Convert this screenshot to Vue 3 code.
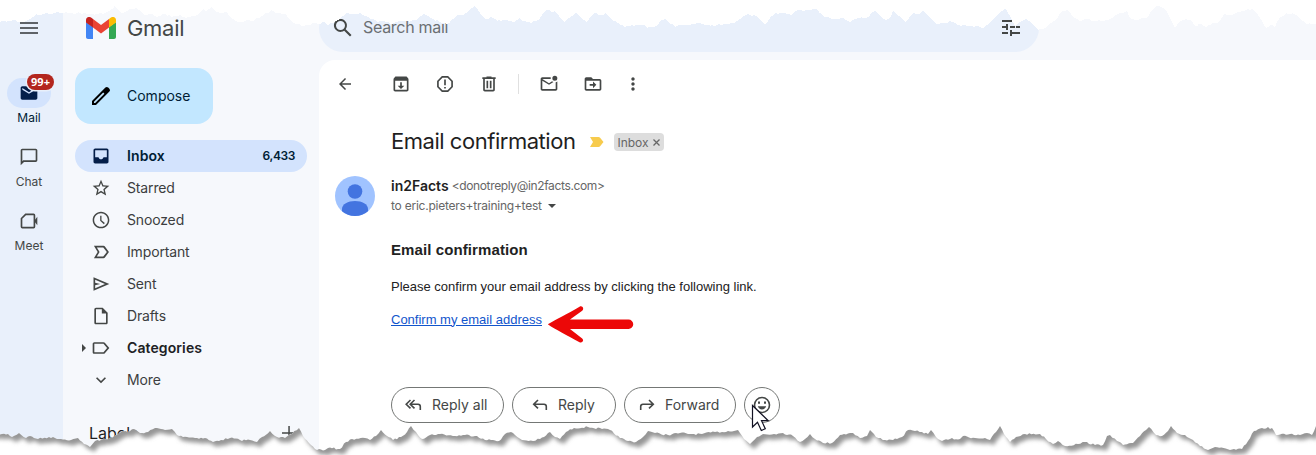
<script setup>
const navItems = [
  { label: 'Inbox', icon: 'inbox', count: '6,433', active: true },
  { label: 'Starred', icon: 'star' },
  { label: 'Snoozed', icon: 'clock' },
  { label: 'Important', icon: 'important' },
  { label: 'Sent', icon: 'sent' },
  { label: 'Drafts', icon: 'draft' },
  { label: 'Categories', icon: 'label', bold: true },
  { label: 'More', icon: 'chevron' },
]

const icons = {
  inbox: 'M19 3H5c-1.1 0-2 .9-2 2v14c0 1.1.9 2 2 2h14c1.1 0 2-.9 2-2V5c0-1.1-.9-2-2-2zm0 10.500h-4c-.400 1.300-1.500 2.500-3 2.500s-2.600-1.200-3-2.500H5V5h14z',
  star: 'M22 9.24l-7.19-.62L12 2 9.19 8.63 2 9.24l5.46 4.73L5.82 21 12 17.27 18.18 21l-1.63-7.03L22 9.24zM12 15.4l-3.76 2.27 1-4.28-3.32-2.88 4.38-.38L12 6.1l1.71 4.04 4.38.38-3.32 2.88 1 4.28L12 15.4z',
  clock: 'M12 2C6.5 2 2 6.5 2 12s4.5 10 10 10 10-4.5 10-10S17.5 2 12 2zm0 18.2c-4.5 0-8.2-3.7-8.2-8.2S7.500 3.800 12 3.800s8.200 3.700 8.200 8.200-3.700 8.200-8.200 8.200zM12.600 7H11v6l4.400 4 1.200-1.300-4-3.500z',
  important: 'M3.500 19.500 8 12 3.500 4.500H15c.700 0 1.300.300 1.700.800L21.500 12l-4.800 6.700c-.400.500-1 .800-1.700.800zM7 17.500h7.700L19 12l-4.300-5.500H7l3.300 5.500z',
  sent: 'M3 4v16l19-8zm2 13v-3.500l6-1.500-6-1.500V7l11.800 5z',
  draft: 'M14 2H6c-1.100 0-2 .900-2 2v16c0 1.100.900 2 2 2h12c1.100 0 2-.900 2-2V8zM6 20V4h7v5h5v11z',
  label: 'M15 5H4c-1.100 0-2 .900-2 2v10c0 1.100.900 2 2 2h11c.700 0 1.300-.300 1.600-.800L22 12l-5.400-6.200C16.300 5.300 15.700 5 15 5zm0 12H4V7h11l4.300 5z',
  chevron: 'M16.600 8.600 12 13.200 7.400 8.600 6 10l6 6 6-6z',
}

const tools = {
  back: 'M20 11H7.800l5.600-5.600L12 4l-8 8 8 8 1.400-1.400L7.800 13H20z',
  archive: 'M20.500 5.200 19.200 3.500C18.900 3.200 18.500 3 18 3H6c-.500 0-.900.200-1.200.500L3.500 5.200C3.200 5.600 3 6 3 6.500V19c0 1.100.900 2 2 2h14c1.100 0 2-.900 2-2V6.500c0-.500-.200-.900-.500-1.300zM5 19V8h14v11zM13 10h-2v4H8l4 4 4-4h-3z',
  spam: 'M11 6.500h2v7h-2zM11 15.500h2v2h-2zM15.700 2.500H8.300L2.500 8.300v7.400l5.800 5.800h7.400l5.800-5.800V8.300zM19.500 15 15 19.500H9L4.500 15V9L9 4.500h6L19.500 9z',
  trash: 'M15 4V3H9v1H4v2h1v13c0 1.100.900 2 2 2h10c1.100 0 2-.900 2-2V6h1V4zm2 15H7V6h10zM9 8h2v9H9zm4 0h2v9h-2z',
  unread: 'M22 9v9c0 1.100-.900 2-2 2H4c-1.100 0-2-.900-2-2V6c0-1.100.900-2 2-2h10.100a5 5 0 0 0 0 2H4l8 5 3.700-2.300c.500.400 1 .800 1.700 1L12 13 4 8v10h16V9.900c.700-.100 1.400-.500 2-.900zM16 5a3 3 0 1 0 6 0 3 3 0 0 0-6 0z',
  move: 'M20 6h-8l-2-2H4c-1.100 0-2 .900-2 2v12c0 1.100.900 2 2 2h16c1.100 0 2-.900 2-2V8c0-1.100-.900-2-2-2zm0 12H4V8h16zM12 17l4-4-4-4v3H8v2h4z',
  more: 'M12 8c1.100 0 2-.900 2-2s-.900-2-2-2-2 .900-2 2 .900 2 2 2zm0 2c-1.100 0-2 .900-2 2s.900 2 2 2 2-.900 2-2-.900-2-2-2zm0 6c-1.100 0-2 .900-2 2s.900 2 2 2 2-.900 2-2-.900-2-2-2z',
}

const topEdge = '0,22 5,21 11,21 13,20 18,22 24,22 28,20 33,17 36,14 40,15 46,13 52,14 58,12 64,13 72,13 84,13 97,14 105,13 109,11 113,9 114.5,6 118,10 122,13 125,12 131,9 136,8 139,10 145,15 151,14 157,17 165,14 172,17 180,15 186,18 195,16 199,14 203,9 206,11 209,9 212,7 216,12 223,13 227,12 231,18 236,21 242,22 247,20 253,21 257,18 262,16 265,13 268,13 271,10 277,13 285,14 291,21 297,24 302,26 310,25 316,23 320,24 324,22 328,25 333,23 338,20 343,16 346,13 352,14 360,13 366,16 371,19 378,22 384,21 391,24 399,21 411,21 417,20 421,16 424,13 428,16 433,19 440,22 447,24 453,19 458,15 463,15 468,12 474,6 478,10 483,17 487,19 491,17 497,21 507,20 513,22 519,18 525,21 531,23 538,20 542,15 547,10 552,12 555,11 559,16 565,22 569,18 576,13 580,17 587,22 592,15 595,13 601,15 606,13 612,19 618,23 624,27 632,25 640,25 645,25 647,28 657,26 661,20 665,19 671,24 675,27 680,25 690,25 700,23 708,25 717,25 725,24 735,23 741,19 746,15 754,15 760,20 765,25 770,18 776,13 785,13 791,15 798,10 808,10 816,9 824,17 835,19 841,18 850,22 860,18 868,17 872,12 875,11 880,15 886,20 891,17 893,11 899,16 906,22 913,13 919,14 923,11 929,16 937,24 944,23 950,21 958,25 965,25 972,26 980,27 984,28 993,19 1005,8 1010,16 1015,26 1020,22 1026,19 1033,24 1038,30 1045,28 1053,21 1057,19 1061,12 1067,10 1073,17 1079,21 1085,19 1096,21 1104,21 1112,18 1118,14 1122,13 1127,11 1131,19 1137,20 1142,18 1147,18 1151,11 1157,6 1164,8 1168,14 1175,28 1180,21 1186,19 1192,21 1195,26 1201,24 1206,27 1213,23 1218,23 1225,14 1231,15 1238,12 1248,9 1254,10 1260,18 1266,28 1270,25 1275,27 1279,19 1286,13 1294,14 1300,19 1307,24 1316,24'
const bottomEdge = '-10,434 8,434 12,437 19,433 26,438 30,436 38,439 49,437 61,439 71,440 78,438 84,444 90,447 95,441 104,439 112,438 121,432 130,431 134,429 140,433 148,432 155,428 165,430 172,429 177,435 187,437 197,438 205,438 213,442 221,440 230,438 240,440 250,440 257,442 262,437 270,431 277,437 285,438 292,434 299,428 303,436 311,445 315,449 325,450 328,448 340,449 346,442 352,439 365,438 370,440 376,436 381,430 387,436 393,440 401,437 407,432 411,426 416,432 422,439 430,435 440,434 455,436 465,435 477,436 485,440 493,440 499,441 505,434 511,432 515,435 522,440 533,441 540,439 544,437 550,432 555,437 560,439 566,432 574,428 588,427 602,429 610,430 620,438 628,441 636,442 643,437 648,431 655,433 668,435 680,433 690,434 702,434 715,432 722,432 738,430 744,439 750,444 757,437 763,434 774,434 783,433 793,436 800,442 805,439 810,434 815,439 823,443 832,443 840,435 850,433 853,433 860,438 867,436 870,430 876,437 885,440 897,439 902,437 908,430 915,431 922,432 928,434 931,430 936,437 942,441 950,439 960,439 963,436 975,438 985,438 990,440 996,432 1000,426 1004,434 1010,442 1016,437 1025,434 1040,434 1046,439 1053,444 1058,441 1065,446 1078,444 1085,442 1095,445 1103,445 1107,436 1110,435 1117,441 1123,445 1133,443 1140,436 1146,430 1149,427 1156,435 1162,436 1168,431 1171,426 1177,433 1185,435 1193,440 1200,446 1208,450 1215,447 1230,450 1242,449 1248,441 1254,431 1262,428 1272,428 1276,435 1290,434 1300,435 1307,433 1312,435 1316,426 1330,426'

// Adds small steps between the main points so that the paper edge looks ragged.
function ragged(edge) {
  const pts = edge.split(' ').map((p) => p.split(',').map(Number))
  const out = []
  let seed = 7
  pts.forEach((p, i) => {
    out.push(p.join(','))
    const n = pts[i + 1]
    if (!n) return
    const steps = Math.floor((n[0] - p[0]) / 2)
    for (let s = 1; s < steps; s++) {
      seed = (seed * 16807) % 2147483647
      const t = s / steps
      const j = (seed / 2147483647 - 0.5) * 1.8
      out.push(`${(p[0] + (n[0] - p[0]) * t).toFixed(1)},${(p[1] + (n[1] - p[1]) * t + j).toFixed(1)}`)
    }
  })
  return out.join(' ')
}
const topTear = `0,0 ${ragged(topEdge)} 1316,0`
const bottomLine = ragged(bottomEdge)
const bottomTear = `-10,470 ${bottomLine} 1330,470`
const paper = `-10,400 ${bottomLine} 1330,400`
</script>

<template>
  <div class="page">
    <aside class="rail">
      <svg class="menu" width="18" height="12" viewBox="0 0 18 12"><path d="M0 0h18v2H0zM0 5h18v2H0zM0 10h18v2H0z" fill="#5f6368" /></svg>
      <div class="rail-item on">
        <div class="pill">
          <svg width="20" height="20" viewBox="0 0 24 24"><path fill="#041e49" d="M20 4H4c-1.100 0-2 .900-2 2v12c0 1.100.900 2 2 2h16c1.100 0 2-.900 2-2V6c0-1.100-.900-2-2-2zm0 4-8 5-8-5V6l8 5 8-5z" /></svg>
          <span class="badge">99+</span>
        </div>
        <span>Mail</span>
      </div>
      <div class="rail-item">
        <div class="pill"><svg width="20" height="20" viewBox="0 0 24 24"><path fill="#444746" d="M20 2H4c-1.100 0-2 .900-2 2v18l4-4h14c1.100 0 2-.900 2-2V4c0-1.100-.900-2-2-2zm0 14H5l-1 1V4h16z" /></svg></div>
        <span>Chat</span>
      </div>
      <div class="rail-item">
        <div class="pill"><svg width="20" height="20" viewBox="0 0 24 24"><path fill="none" stroke="#444746" stroke-width="2" d="M8 4h9.500c.600 0 1 .400 1 1v14c0 .600-.400 1-1 1H4c-.600 0-1-.400-1-1V9z" /><path fill="#444746" d="M18 12l4-5v10z" /></svg></div>
        <span>Meet</span>
      </div>
    </aside>

    <nav class="side">
      <div class="brand">
        <svg width="30" height="22" viewBox="0 0 30 22">
          <path fill="#4285f4" d="M0 5v15c0 1.100.900 2 2 2h5V10z" />
          <path fill="#34a853" d="M30 5v15c0 1.100-.900 2-2 2h-5V10z" />
          <path fill="#ea4335" d="M7 10.500V2l8 6 8-6v8.500l-8 6z" />
          <path fill="#c5221f" d="M0 5.500V3C0 .300 3.200-1 5.400.800L7 2v8.500z" />
          <path fill="#fbbc04" d="M30 5.500V3c0-2.700-3.200-4-5.400-2.200L23 2v8.500z" />
        </svg>
        <span>Gmail</span>
      </div>
      <div class="compose">
        <svg width="24" height="24" viewBox="0 0 24 24"><path d="M20.400 4.800 19.200 3.600a2 2 0 0 0-2.800 0L3 17v4h4L20.400 7.600a2 2 0 0 0 0-2.800zM6.200 19H5v-1.200l9.200-9.200 1.200 1.200z" /></svg>
        <span>Compose</span>
      </div>
      <div class="list">
        <div v-for="n in navItems" :key="n.label" class="nav" :class="{ active: n.active, bold: n.bold }">
          <i v-if="n.bold" class="caret"></i>
          <svg width="20" height="20" viewBox="0 0 24 24"><path :d="icons[n.icon]" :fill="n.active ? '#041e49' : '#444746'" /></svg>
          <span class="name">{{ n.label }}</span>
          <span v-if="n.count" class="count">{{ n.count }}</span>
        </div>
      </div>
      <div class="labels">
        <span>Labels</span>
        <svg width="14" height="14" viewBox="0 0 14 14"><path d="M6.300 0h1.500v6.300H14v1.500H7.800V14H6.300V7.800H0V6.300h6.300z" fill="#444746" /></svg>
      </div>
    </nav>

    <main class="content">
      <div class="search">
        <svg class="lens" width="24" height="24" viewBox="0 0 24 24"><path fill="#444746" d="M20.500 19 14.700 13.200a6.500 6.500 0 1 0-1.500 1.500l5.800 5.800zM9.500 14a4.500 4.500 0 1 1 0-9 4.500 4.500 0 0 1 0 9z" /></svg>
        <span>Search mail</span>
        <svg class="tune" width="18" height="16" viewBox="0 0 18 16"><path fill="#444746" d="M0 0h10v2H0zM0 6h4V4h2v6H4V8H0zM8 6h5v2H8zM14 6h4v2h-4zM0 12h6v2H0zM8 10h2v2h8v2h-8v2H8z" /></svg>
      </div>
      <section class="mail">
        <div class="toolbar">
          <svg class="t-back" width="18" height="18" viewBox="0 0 24 24"><path :d="tools.back" /></svg>
          <svg width="20" height="20" viewBox="0 0 24 24"><path :d="tools.archive" /></svg>
          <svg width="20" height="20" viewBox="0 0 24 24"><path :d="tools.spam" /></svg>
          <svg width="20" height="20" viewBox="0 0 24 24"><path :d="tools.trash" /></svg>
          <i class="sep"></i>
          <svg width="20" height="20" viewBox="0 0 24 24"><path :d="tools.unread" /></svg>
          <svg width="20" height="20" viewBox="0 0 24 24"><path :d="tools.move" /></svg>
          <svg class="t-more" width="20" height="20" viewBox="0 0 24 24"><path :d="tools.more" /></svg>
        </div>
        <div class="subject">
          <h1>Email confirmation</h1>
          <svg width="14" height="10" viewBox="0 0 14 10"><path fill="#f7cb4d" d="M0 0h8.500c.700 0 1.200.300 1.600.800L13.500 5l-3.400 4.200c-.400.500-.900.800-1.600.800H0l3-5z" /></svg>
          <span class="chip"><span>Inbox</span><svg width="7" height="7" viewBox="0 0 7 7"><path d="m.500.500 6 6m0-6-6 6" stroke="#666" stroke-width="1.300" /></svg></span>
        </div>
        <div class="sender">
          <svg class="avatar" width="40" height="40" viewBox="0 0 40 40">
            <circle cx="20" cy="20" r="20" fill="#a0c3ff" />
            <circle cx="20" cy="15.500" r="7.300" fill="#4374e0" />
            <path fill="#4374e0" d="M7 35.200V33c0-5 6-8 13-8s13 3 13 8v2.200a20 20 0 0 1-26 0z" />
          </svg>
          <div class="who">
            <div class="from"><b>in2Facts</b><span>&lt;donotreply@in2facts.com&gt;</span></div>
            <div class="to"><span>to eric.pieters+training+test</span><i></i></div>
          </div>
        </div>
        <div class="body">
          <h2>Email confirmation</h2>
          <p>Please confirm your email address by clicking the following link.</p>
          <div class="link-row">
            <a>Confirm my email address</a>
            <svg width="87" height="37" viewBox="0 0 87 37"><path d="M.800 18.200C9 13.500 20 8 32.500.700c3-1.500 5 2 2.700 4L23 13.500h58.500a4.700 4.700 0 0 1 0 9.500H23l12.200 9.500c2.300 2-.200 5-2.700 3.700C20 29 9 24 .800 18.200z" fill="#ec0808" /></svg>
          </div>
        </div>
        <div class="actions">
          <div class="btn all">
            <svg width="20" height="20" viewBox="0 0 20 20"><path d="M6.500 5 2.200 9.200l4.300 4.200M10.500 5 6.200 9.200l4.300 4.200M6.500 9.200H14c1.400 0 2.300.900 2.300 2.300V15" /></svg><span>Reply all</span>
          </div>
          <div class="btn reply">
            <svg width="20" height="20" viewBox="0 0 20 20"><path d="M8 5 3.700 9.200 8 13.400M4 9.200h10c1.400 0 2.300.900 2.300 2.300V15" /></svg><span>Reply</span>
          </div>
          <div class="btn fwd">
            <svg width="20" height="20" viewBox="0 0 20 20"><path d="m12 5 4.300 4.200-4.300 4.200M16 9.200H6c-1.400 0-2.300.900-2.300 2.300V15" /></svg><span>Forward</span>
          </div>
          <div class="btn emoji">
            <svg width="20" height="20" viewBox="0 0 20 20"><circle cx="10" cy="10" r="7.500" /><path class="solid" d="M6 6.500h2v2.200H6zM12 6.500h2v2.200h-2zM5.800 11.200h8.400c-.600 2-2.200 3.200-4.200 3.200s-3.600-1.200-4.200-3.200z" /></svg>
          </div>
        </div>
      </section>
    </main>

    <svg class="tears" width="1316" height="455" viewBox="0 0 1316 455">
      <defs>
        <clipPath id="lower"><polygon :points="bottomTear" /></clipPath>
        <filter id="soft" x="-5%" y="-50%" width="110%" height="200%"><feGaussianBlur stdDeviation="2" /></filter>
      </defs>
      <polygon :points="topTear" fill="#fff" shape-rendering="crispEdges" />
      <g clip-path="url(#lower)">
        <rect y="420" width="1316" height="35" fill="#fff" />
        <polygon :points="paper" fill="#969696" transform="translate(4 5)" filter="url(#soft)" />
      </g>
    </svg>
    <svg class="cursor" width="19" height="28" viewBox="0 0 19 28"><path d="M1.500 1.500V23l5-4.700 3.800 8.200 4-1.800-3.800-8h6.700z" fill="#fff" stroke="#111122" stroke-width="1.200" /></svg>
  </div>
</template>

<style>
body { margin: 0; background: #fff; }
</style>

<style scoped>
.page { position: relative; display: flex; width: 1316px; height: 455px; overflow: hidden; background: #f6f8fc; font-family: Inter, "Open Sans", sans-serif; color: #444746; }
svg { display: block; flex: none; }
.rail { width: 63px; flex: none; background: #e9f0fb; display: flex; flex-direction: column; }
.menu { margin: 22px 0 0 20px; }
.rail-item { display: flex; flex-direction: column; align-items: center; width: 58px; height: 50px; margin-top: 14px; font-size: 12px; line-height: 16px; }
.rail-item.on { margin-top: 44px; color: #001d35; }
.rail-item > span { margin-top: 2px; }
.pill { position: relative; width: 44px; height: 30px; border-radius: 15px; display: grid; place-items: center; }
.on .pill { background: #d3e3fd; }
.badge { position: absolute; left: 20px; top: -4px; width: 27px; height: 16px; border-radius: 8px; background: #b3261e; color: #fff; font: 700 11px/16px "Open Sans", sans-serif; text-align: center; box-shadow: 0 0 0 1.500px #e9f0fb; }
.side { width: 256px; flex: none; display: flex; flex-direction: column; }
.brand { display: flex; align-items: center; gap: 11px; height: 24px; margin: 16px 0 0 23px; font-size: 22px; letter-spacing: -.3px; }
.compose { display: flex; align-items: center; gap: 14px; box-sizing: border-box; width: 138px; height: 56px; margin: 28px 0 0 12px; padding-left: 14px; border-radius: 16px; background: #c2e7ff; color: #001d35; font-size: 14px; }
.compose span, .name, .count, .btn span { padding-bottom: 2px; }
.list { margin-top: 16px; }
.nav { position: relative; display: flex; align-items: center; box-sizing: border-box; width: 244px; height: 32px; padding: 0 12px 0 28px; font-size: 14px; letter-spacing: -.15px; color: #3c3e40; }
.name { margin-left: 16px; }
.nav.active { width: 232px; margin-left: 12px; padding-left: 16px; border-radius: 16px; background: #d3e3fd; color: #001d35; font-weight: 600; letter-spacing: .1px; }
.nav.bold { font-weight: 600; color: #202124; letter-spacing: .1px; }
.nav .count { margin-left: auto; font-size: 12px; letter-spacing: -.4px; }
.caret { position: absolute; left: 19px; top: 12px; border-left: 4px solid #444746; border-top: 4px solid transparent; border-bottom: 4px solid transparent; }
.labels { display: flex; align-items: center; justify-content: space-between; margin: 25px 23px 0 26px; height: 24px; font-size: 16px; color: #1f1f1f; }
.content { flex: 1; min-width: 0; display: flex; flex-direction: column; }
.search { display: flex; align-items: center; box-sizing: border-box; width: 720px; height: 48px; margin-top: 4px; padding: 0 19px 0 12px; border-radius: 24px; background: #e9f0fb; font-size: 16px; letter-spacing: -.3px; color: #6b6f73; }
.search span { margin-left: 8px; padding-bottom: 2px; }
.tune { margin-left: auto; }
.mail { flex: 1; margin-top: 8px; border-radius: 16px 0 0 0; background: #fff; }
.toolbar { display: flex; align-items: center; height: 48px; padding-left: 17px; gap: 24px; fill: #444746; }
.t-back { margin-right: 13px; }
.sep { width: 1px; height: 20px; background: #e0e0e0; margin: 0 -4px 0 -5px; }
.t-more { margin-left: -4px; }
.subject { display: flex; align-items: center; height: 28px; margin: 20px 0 0 72px; }
h1 { margin: 0 15px 0 0; padding-bottom: 2px; font-size: 22px; font-weight: 400; color: #1f1f1f; white-space: nowrap; letter-spacing: -.47px; }
.chip { display: flex; align-items: center; gap: 4px; box-sizing: border-box; height: 18px; margin-left: 10px; padding: 0 4px 0 3px; border-radius: 4px; background: #ddd; color: #666; font-size: 12px; }
.sender { display: flex; margin: 20px 0 0 16px; }
.who { margin-left: 16px; }
.from, .to { display: flex; align-items: center; box-sizing: border-box; height: 20px; font-size: 12px; letter-spacing: -.24px; color: #666; }
.from { padding-bottom: 2px; }
.from span { letter-spacing: -.36px; }
.from b { margin-right: 3px; font-size: 14px; font-weight: 600; color: #1f1f1f; letter-spacing: 0; }
.to span { padding-bottom: 2px; }
.to i { margin-left: 6px; border-top: 4px solid #444746; border-left: 4px solid transparent; border-right: 4px solid transparent; }
.body { margin: 25px 0 0 72px; font-family: "Liberation Sans", Arial, sans-serif; color: #222; font-size: 13px; }
h2 { margin: 0; font-size: 15px; line-height: 18px; font-weight: 700; letter-spacing: .1px; }
p { margin: 19px 0 0; line-height: 18px; }
.link-row { display: flex; align-items: center; height: 37px; margin-top: 10px; }
.link-row a { color: #15c; text-decoration: underline; line-height: 18px; margin-top: -10px; }
.link-row svg { margin-left: 5px; }
.actions { display: flex; gap: 8px; margin: 44px 0 0 72px; }
.btn { display: flex; align-items: center; box-sizing: border-box; height: 36px; border: 1px solid #747775; border-radius: 18px; padding-left: 12px; font-size: 14px; font-weight: 400; }
.btn svg { fill: none; stroke: #444746; stroke-width: 1.600; }
.btn .solid { fill: #444746; stroke: none; }
.btn span { margin-left: 8px; }
.all { width: 113px; }
.reply { width: 104px; padding-left: 17px; }
.fwd { width: 112px; }
.emoji { width: 36px; padding-left: 7px; }
.tears { position: absolute; inset: 0; }
.cursor { position: absolute; left: 751px; top: 404px; }
</style>
